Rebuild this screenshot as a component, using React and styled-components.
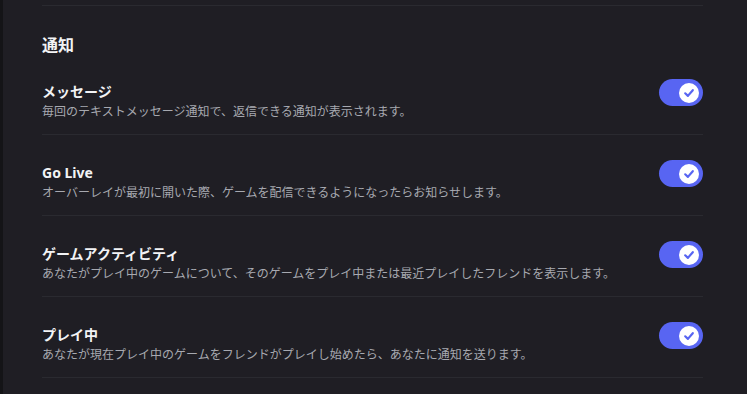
import React, { useState } from 'react';
import styled, { createGlobalStyle } from 'styled-components';

const GlobalStyle = createGlobalStyle`
  html, body {
    margin: 0;
    padding: 0;
    background: #1f1e24;
  }
  body {
    font-family: "Noto Sans", "Noto Sans CJK JP", sans-serif;
  }
`;

const Page = styled.div`
  display: flex;
  width: 747px;
  height: 394px;
  overflow: hidden;
  background: #1f1e24;
`;

// dark strip on the left edge
const Gutter = styled.div`
  width: 3px;
  flex-shrink: 0;
  background: #141417;
`;

const Content = styled.div`
  flex: 1;
  padding: 5px 44px 0 39px;
`;

const TopRule = styled.div`
  height: 1px;
  background: #2a2a30;
`;

const Heading = styled.h2`
  margin: 28px 0 0;
  font-size: 16px;
  line-height: 20px;
  font-weight: 700;
  color: #f2f3f5;
  font-family: "Noto Sans CJK JP", sans-serif;
`;

const Row = styled.div`
  display: flex;
  align-items: flex-start;
  justify-content: space-between;
  padding: 25px 0 15px;
  border-bottom: 1px solid #2a2a30;
`;

const TextBlock = styled.div`
  padding-top: 4px;
`;

const Title = styled.div`
  font-size: 14px;
  line-height: 18px;
  font-weight: 700;
  color: #f2f3f5;
  font-family: "Noto Sans", "Noto Sans CJK JP", sans-serif;
`;

const Desc = styled.div`
  margin-top: 2px;
  font-size: 12px;
  line-height: 16px;
  color: #a7a9b0;
  font-family: "Noto Sans CJK JP", sans-serif;
`;

const Switch = styled.button`
  flex-shrink: 0;
  width: 44px;
  height: 27px;
  border: none;
  padding: 0 4px;
  border-radius: 14px;
  display: flex;
  align-items: center;
  justify-content: ${p => (p.on ? 'flex-end' : 'flex-start')};
  background: ${p => (p.on ? '#5865f2' : '#72767d')};
  cursor: pointer;
`;

const Knob = styled.span`
  width: 20px;
  height: 20px;
  border-radius: 50%;
  background: #ffffff;
  display: flex;
  align-items: center;
  justify-content: center;
`;

const Check = () => (
  <svg width="12" height="12" viewBox="0 0 12 12">
    <path d="M2.2 6.3 L4.9 8.9 L9.8 3.2" fill="none" stroke="#5865f2" strokeWidth="2.2" strokeLinecap="round" strokeLinejoin="round" />
  </svg>
);

const items = [
  { title: 'メッセージ', desc: '毎回のテキストメッセージ通知で、返信できる通知が表示されます。' },
  { title: 'Go Live', desc: 'オーバーレイが最初に開いた際、ゲームを配信できるようになったらお知らせします。' },
  { title: 'ゲームアクティビティ', desc: 'あなたがプレイ中のゲームについて、そのゲームをプレイ中または最近プレイしたフレンドを表示します。' },
  { title: 'プレイ中', desc: 'あなたが現在プレイ中のゲームをフレンドがプレイし始めたら、あなたに通知を送ります。' },
];

const SettingRow = ({ title, desc }) => {
  const [on, setOn] = useState(true);
  return (
    <Row>
      <TextBlock>
        <Title>{title}</Title>
        <Desc>{desc}</Desc>
      </TextBlock>
      <Switch on={on} onClick={() => setOn(!on)}>
        <Knob>{on && <Check />}</Knob>
      </Switch>
    </Row>
  );
};

export default function App() {
  return (
    <>
      <GlobalStyle />
      <Page>
        <Gutter />
        <Content>
          <TopRule />
          <Heading>通知</Heading>
          {items.map(it => (
            <SettingRow key={it.title} title={it.title} desc={it.desc} />
          ))}
        </Content>
      </Page>
    </>
  );
}
